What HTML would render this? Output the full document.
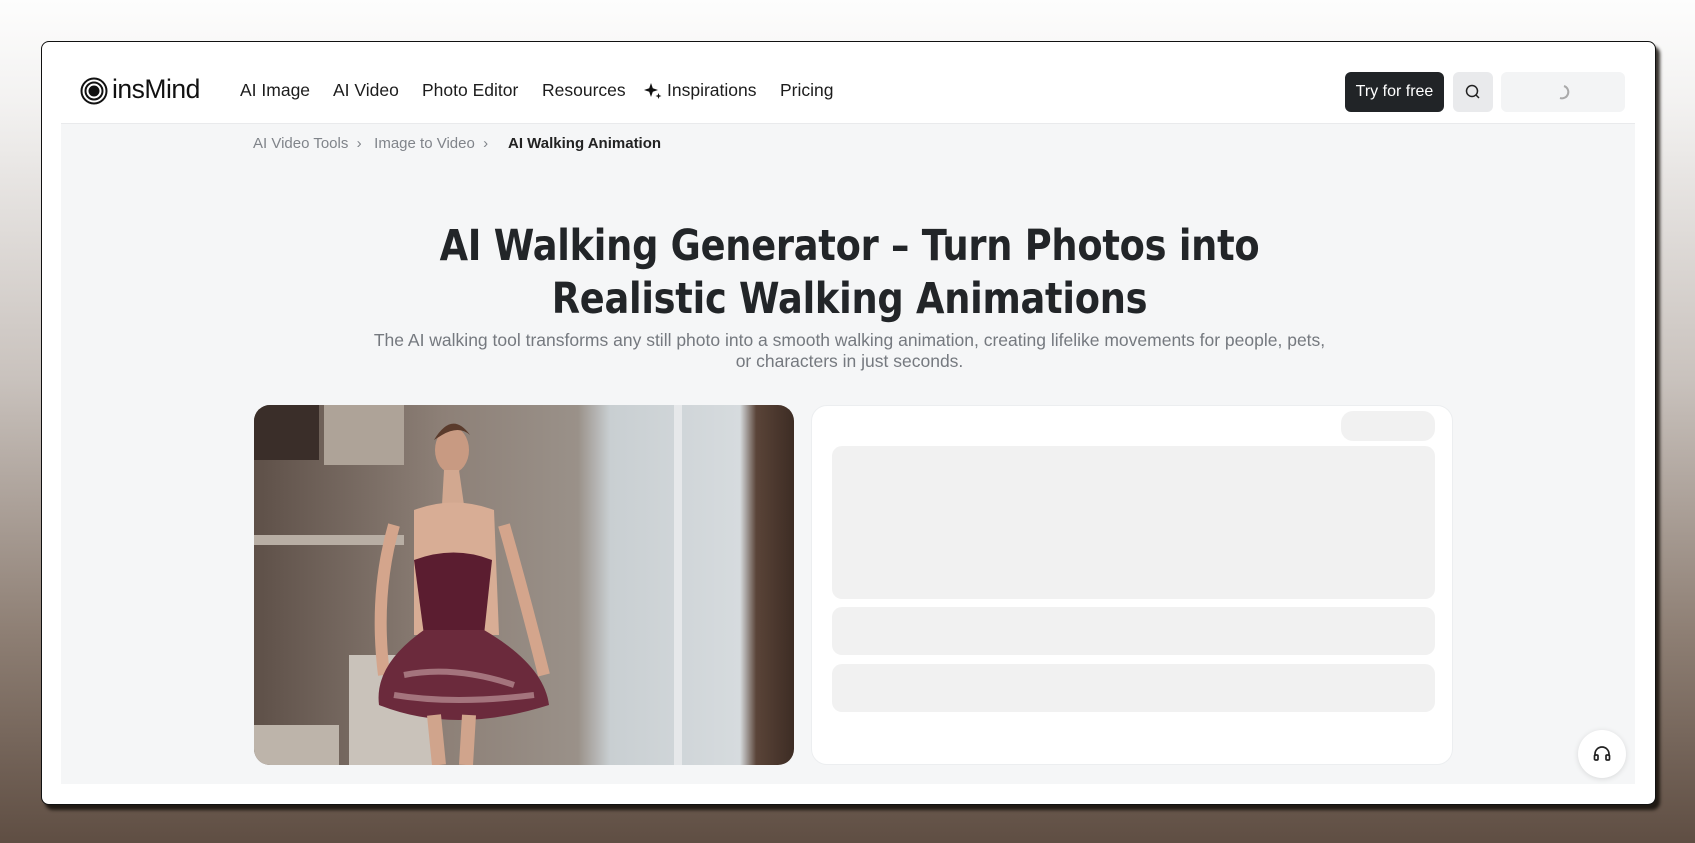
<!DOCTYPE html>
<html><head><meta charset="utf-8"><style>
*{margin:0;padding:0;box-sizing:border-box}
body{width:1695px;height:843px;overflow:hidden;font-family:"Liberation Sans",sans-serif;background:linear-gradient(180deg,#fdfdfd 0%,#f3f2f1 12%,#c9c2bd 45%,#8e7f74 75%,#5f4e43 100%);position:relative}
.win{position:absolute;left:41px;top:41px;width:1615px;height:764px;background:#fff;border:1px solid #111;border-radius:8px;box-shadow:4px 5px 3px rgba(20,15,10,.85);overflow:hidden}
.nav{position:absolute;top:0;left:0;right:0;height:81px}
.nav a{position:absolute;top:38px;font-size:17.5px;color:#1c1c1c;text-decoration:none}
.gray{position:absolute;left:19px;top:81px;width:1574px;height:661px;background:#f5f6f7;border-top:1px solid #e9eaec}
.bc{position:absolute;top:93px;font-size:15px;color:#80848a}
h1{position:absolute;left:0;width:1615px;text-align:center;top:178px;font-size:43px;line-height:53px;color:#222528;font-family:"DejaVu Sans","Liberation Sans",sans-serif;font-weight:bold;letter-spacing:-0.3px;transform:scaleX(0.855)}
.sub{position:absolute;left:0;width:1615px;text-align:center;top:288px;font-size:17.5px;line-height:21px;color:#75797f}
.card{position:absolute;left:769px;top:363px;width:642px;height:360px;background:#fff;border:1px solid #eceef0;border-radius:16px}
.sk{position:absolute;background:#f1f1f1;border-radius:10px}
</style></head><body>
<div class="win">
 <div class="nav">
  <svg style="position:absolute;left:38px;top:35px" width="28" height="28" viewBox="0 0 28 28" fill="none" stroke="#111" stroke-width="2"><circle cx="14" cy="14" r="12.5"/><circle cx="14" cy="14" r="8.5"/><circle cx="14" cy="14" r="4.5" fill="#111"/></svg>
  <div style="position:absolute;left:70px;top:32px;font-size:26.5px;color:#111;letter-spacing:-0.5px">insMind</div>
  <a style="left:198px">AI Image</a>
  <a style="left:291px">AI Video</a>
  <a style="left:380px">Photo Editor</a>
  <a style="left:500px">Resources</a>
  <svg style="position:absolute;left:601px;top:39px" width="20" height="20" viewBox="0 0 20 20" fill="#111"><path d="M8 2 L9.8 7.2 L15 9 L9.8 10.8 L8 16 L6.2 10.8 L1 9 L6.2 7.2Z"/><path d="M15.5 12 L16.3 14.2 L18.5 15 L16.3 15.8 L15.5 18 L14.7 15.8 L12.5 15 L14.7 14.2Z"/></svg>
  <a style="left:625px">Inspirations</a>
  <a style="left:738px">Pricing</a>
  <div style="position:absolute;left:1303px;top:30px;width:99px;height:40px;background:#212427;border-radius:6px;color:#fff;font-size:16px;line-height:40px;text-align:center">Try for free</div>
  <div style="position:absolute;left:1411px;top:30px;width:40px;height:40px;background:#e9eaec;border-radius:6px"><svg style="position:absolute;left:12px;top:12px" width="16" height="16" viewBox="0 0 16 16" fill="none" stroke="#222" stroke-width="1.5"><circle cx="7" cy="7" r="5.5"/><path d="M11 11l3 3"/></svg></div>
  <div style="position:absolute;left:1459px;top:30px;width:124px;height:40px;background:#f3f4f5;border-radius:6px"><svg style="position:absolute;left:54px;top:12px" width="16" height="16" viewBox="0 0 16 16" fill="none" stroke="#aaa" stroke-width="2"><path d="M9 2 A6 6 0 0 1 5 14"/></svg></div>
 </div>
 <div class="gray"></div>
 <div class="bc" style="left:211px">AI Video Tools &nbsp;›&nbsp;&nbsp; Image to Video &nbsp;›</div>
 <div class="bc" style="left:466px;color:#222;font-weight:bold">AI Walking Animation</div>
 <h1>AI Walking Generator – Turn Photos into<br>Realistic Walking Animations</h1>
 <div class="sub">The AI walking tool transforms any still photo into a smooth walking animation, creating lifelike movements for people, pets,<br>or characters in just seconds.</div>
 <svg style="position:absolute;left:212px;top:363px;border-radius:16px" width="540" height="360" viewBox="0 0 540 360">
  <defs><linearGradient id="bg" x1="0" x2="1"><stop offset="0" stop-color="#5e5048"/><stop offset=".35" stop-color="#8d8077"/><stop offset=".6" stop-color="#9a9189"/><stop offset=".66" stop-color="#c9cfd2"/><stop offset=".9" stop-color="#d6dbde"/><stop offset=".93" stop-color="#5a4438"/><stop offset="1" stop-color="#3d2c24"/></linearGradient></defs>
  <rect width="540" height="360" fill="url(#bg)"/>
  <rect x="0" y="0" width="65" height="55" fill="#3a2e29"/>
  <rect x="70" y="0" width="80" height="60" fill="#aea398"/>
  <rect x="0" y="130" width="150" height="10" fill="#b8aea4"/>
  <rect x="95" y="250" width="90" height="110" fill="#c9c2ba"/>
  <rect x="0" y="320" width="85" height="40" fill="#bdb4aa"/>
  <rect x="420" y="0" width="8" height="360" fill="#e6e8ea"/>
  <ellipse cx="198" cy="45" rx="17" ry="23" fill="#c89a82"/>
  <path d="M180 35 Q198 5 216 30 Q205 20 188 30Z" fill="#5a3b2c"/>
  <path d="M190 65 L205 65 L210 100 L188 100Z" fill="#d2a890"/>
  <path d="M160 105 Q200 90 240 105 L245 230 L160 230Z" fill="#d8ad95"/>
  <path d="M140 120 Q120 190 130 270" stroke="#d4a58c" stroke-width="12" fill="none"/>
  <path d="M250 120 Q270 190 290 270" stroke="#d4a58c" stroke-width="12" fill="none"/>
  <path d="M160 155 Q200 140 238 155 L230 230 L170 230Z" fill="#5b1d30"/>
  <path d="M170 225 Q120 260 125 300 Q200 330 295 300 Q290 260 230 225Z" fill="#6b2a3c"/>
  <path d="M150 270 Q200 260 260 280 M140 290 Q200 300 280 290" stroke="#c9a7a8" stroke-width="6" fill="none" opacity=".6"/>
  <path d="M180 310 L185 360 M215 310 L212 360" stroke="#d0a48c" stroke-width="14"/>
 </svg>
 <div class="card">
  <div class="sk" style="left:529px;top:5px;width:94px;height:30px;border-radius:12px"></div>
  <div class="sk" style="left:20px;top:40px;width:603px;height:153px"></div>
  <div class="sk" style="left:20px;top:201px;width:603px;height:48px"></div>
  <div class="sk" style="left:20px;top:258px;width:603px;height:48px"></div>
 </div>
 <div style="position:absolute;left:1536px;top:688px;width:48px;height:48px;border-radius:50%;background:#fff;box-shadow:0 1px 6px rgba(0,0,0,.12)"><svg style="position:absolute;left:14px;top:14px" width="20" height="20" viewBox="0 0 20 20" fill="none" stroke="#222" stroke-width="1.7"><path d="M3 12 V10 a7 7 0 0 1 14 0 V12"/><rect x="2.5" y="11" width="3.5" height="5" rx="1"/><rect x="14" y="11" width="3.5" height="5" rx="1"/></svg></div>
</div>
</body></html>
